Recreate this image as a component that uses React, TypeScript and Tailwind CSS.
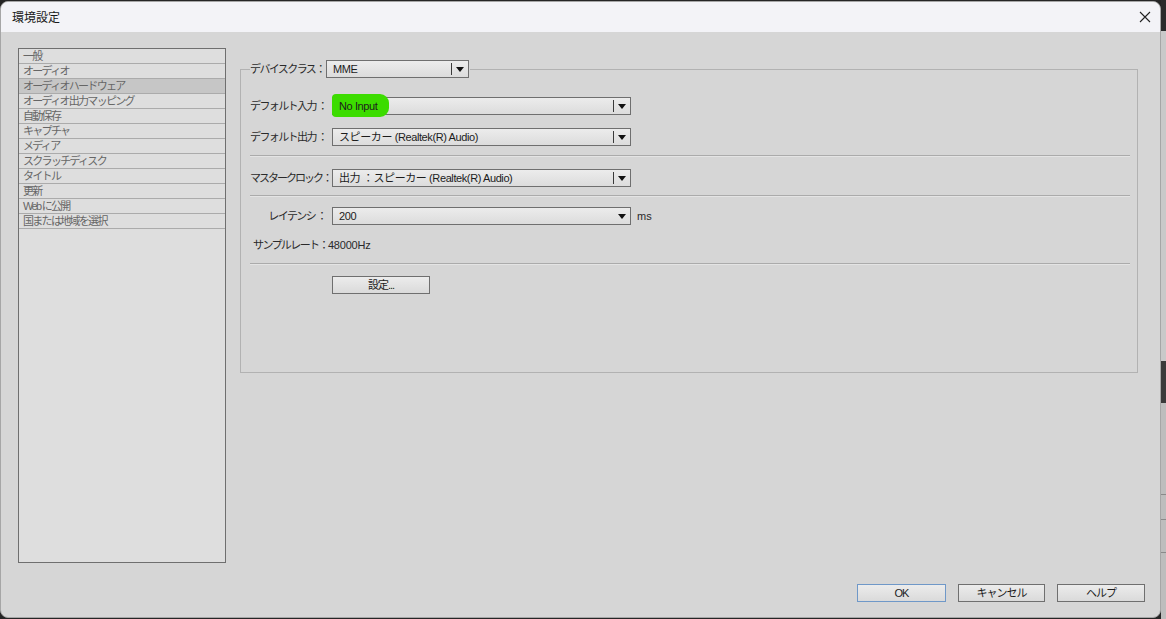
import React from 'react';

const font = { fontFamily: '"Liberation Sans", "Noto Sans CJK JP", sans-serif' };

const pages = [
  '一般',
  'オーディオ',
  'オーディオハードウェア',
  'オーディオ出力マッピング',
  '自動保存',
  'キャプチャ',
  'メディア',
  'スクラッチディスク',
  'タイトル',
  '更新',
  'Web に公開',
  '国または地域を選択',
];

const Arrow = () => (
  <svg width="8" height="5" viewBox="0 0 8 5" className="shrink-0">
    <path d="M0 0 L8 0 L4 5 Z" fill="#111" />
  </svg>
);

function Select({
  value,
  width,
  sep = true,
  highlight = false,
}: {
  value: string;
  width: string;
  sep?: boolean;
  highlight?: boolean;
}) {
  return (
    <div
      className={`${width} h-[18px] relative flex items-center border border-[#6f6f6f] bg-gradient-to-b from-[#ececec] to-[#dcdcdc]`}
    >
      {highlight && (
        <div className="absolute -left-px -top-[4px] w-[57px] h-[23px] rounded-[4px] rounded-r-[9px] bg-[#3cdc00]" />
      )}
      <span className="relative flex-1 pl-[6px] text-[11px] text-[#1c1c1c] whitespace-nowrap leading-none tracking-[-0.4px]">
        {value}
      </span>
      {sep && <div className="w-px h-[12px] bg-[#3a3a3a]" />}
      <div className="w-[16px] flex justify-center">
        <Arrow />
      </div>
    </div>
  );
}

const Label = ({
  text,
  w = 'w-[82px]',
  right = false,
  tight = 'tracking-[-1.6px]',
}: {
  text: string;
  w?: string;
  right?: boolean;
  tight?: string;
}) => (
  <span
    className={`${w} shrink-0 text-[11px] text-[#2a2a2a] ${tight} whitespace-nowrap ${right ? 'text-right pr-[6px]' : ''}`}
  >
    {text}
  </span>
);

const Sep = () => <div className="h-px bg-[#ababab] border-b border-[#e4e4e4] box-content" />;

const Button = ({ text, focus = false, w = 'w-[87px]' }: { text: string; focus?: boolean; w?: string }) => (
  <button
    className={`${w} h-[18px] flex items-center justify-center text-[11px] text-[#1c1c1c] tracking-[-1px] bg-gradient-to-b from-[#ececec] to-[#dadada] border ${
      focus ? 'border-[#6f98c8]' : 'border-[#6f6f6f]'
    }`}
  >
    {text}
  </button>
);

export default function App() {
  return (
    <div className="w-[1166px] h-[619px] bg-[#252525] flex overflow-hidden" style={font}>
      <div className="w-[1161px] h-[617px] mt-px flex flex-col rounded-lg border border-[#a6a6a6] overflow-hidden bg-[#d6d6d6]">
        {/* title bar */}
        <div className="h-[30px] bg-[#f3f3f7] flex items-center justify-between pl-[11px] pr-[8px] shrink-0">
          <span className="text-[12px] text-[#1a1a1a]" style={{ fontFamily: '"Noto Sans CJK JP", sans-serif' }}>
            環境設定
          </span>
          <svg width="12" height="12" viewBox="0 0 12 12" className="mr-[1px]">
            <path d="M1 1 L11 11 M11 1 L1 11" stroke="#222" strokeWidth="1.1" />
          </svg>
        </div>

        <div className="flex-1 flex flex-col pt-[16px] pl-[17px] pr-[15px]">
          <div className="flex">
            {/* page list */}
            <div className="w-[208px] h-[515px] border border-[#6f6f6f] bg-[#dedede] flex flex-col shrink-0">
              {pages.map((p, i) => (
                <div
                  key={p}
                  className={`h-[15px] pl-[4px] border-b border-[#ababab] text-[11px] leading-[14px] text-[#666] tracking-[-1.7px] whitespace-pre ${
                    i === 2 ? 'bg-[#c6c6c6]' : ''
                  }`}
                >
                  {p}
                </div>
              ))}
            </div>

            {/* hardware group */}
            <fieldset className="ml-[14px] mt-[12px] w-[898px] h-[313px] border border-[#b2b2b2] pl-[9px] pr-[7px]">
              <legend className="flex items-center h-[18px]">
                <Label text="デバイスクラス：" w="w-[76px]" />
                <Select value="MME" width="w-[143px]" />
                <span className="w-[1px]" />
              </legend>

              <div className="flex flex-col pt-[19px]">
                <div className="flex items-center">
                  <Label text="デフォルト入力 ：" />
                  <Select value="No Input" width="w-[299px]" highlight />
                </div>
                <div className="flex items-center mt-[13px]">
                  <Label text="デフォルト出力 ：" />
                  <Select value="スピーカー (Realtek(R) Audio)" width="w-[299px]" />
                </div>
                <div className="mt-[9px]">
                  <Sep />
                </div>
                <div className="flex items-center mt-[12px]">
                  <Label text="マスタークロック：" tight="tracking-[-2px]" />
                  <Select value="出力 ：スピーカー (Realtek(R) Audio)" width="w-[299px]" />
                </div>
                <div className="mt-[8px]">
                  <Sep />
                </div>
                <div className="flex items-center mt-[10px]">
                  <Label text="レイテンシ ：" right />
                  <Select value="200" width="w-[299px]" sep={false} />
                  <span className="ml-[6px] text-[11px] text-[#2a2a2a]">ms</span>
                </div>
                <div className="flex items-center mt-[13px] h-[14px] pl-[3px] text-[11px] text-[#2a2a2a] whitespace-nowrap">
                  <span className="tracking-[-1.6px]">サンプルレート：</span>
                  <span className="tracking-[-0.2px]">48000Hz</span>
                </div>
                <div className="mt-[11px]">
                  <Sep />
                </div>
                <div className="flex mt-[11px] pl-[82px]">
                  <Button text="設定..." w="w-[98px]" />
                </div>
              </div>
            </fieldset>
          </div>

          <div className="flex justify-end mt-[21px] gap-[12px]">
            <Button text="OK" focus w="w-[89px]" />
            <Button text="キャンセル" />
            <Button text="ヘルプ" w="w-[88px]" />
          </div>
        </div>
      </div>

      {/* strip of the window behind */}
      <div className="w-[5px] h-full flex flex-col">
        <div className="h-[31px] bg-[#2a2a2a]" />
        <div className="h-[330px] bg-[#c9c9c9]" />
        <div className="h-[42px] bg-[#3a3a3a]" />
        <div className="h-[92px] bg-[#bdbdbd] border-b border-[#8a8a8a]" />
        <div className="h-[25px] bg-[#bdbdbd] border-b border-[#8a8a8a]" />
        <div className="h-[33px] bg-[#bdbdbd] border-b border-[#8a8a8a]" />
        <div className="flex-1 bg-[#bdbdbd]" />
      </div>
    </div>
  );
}
